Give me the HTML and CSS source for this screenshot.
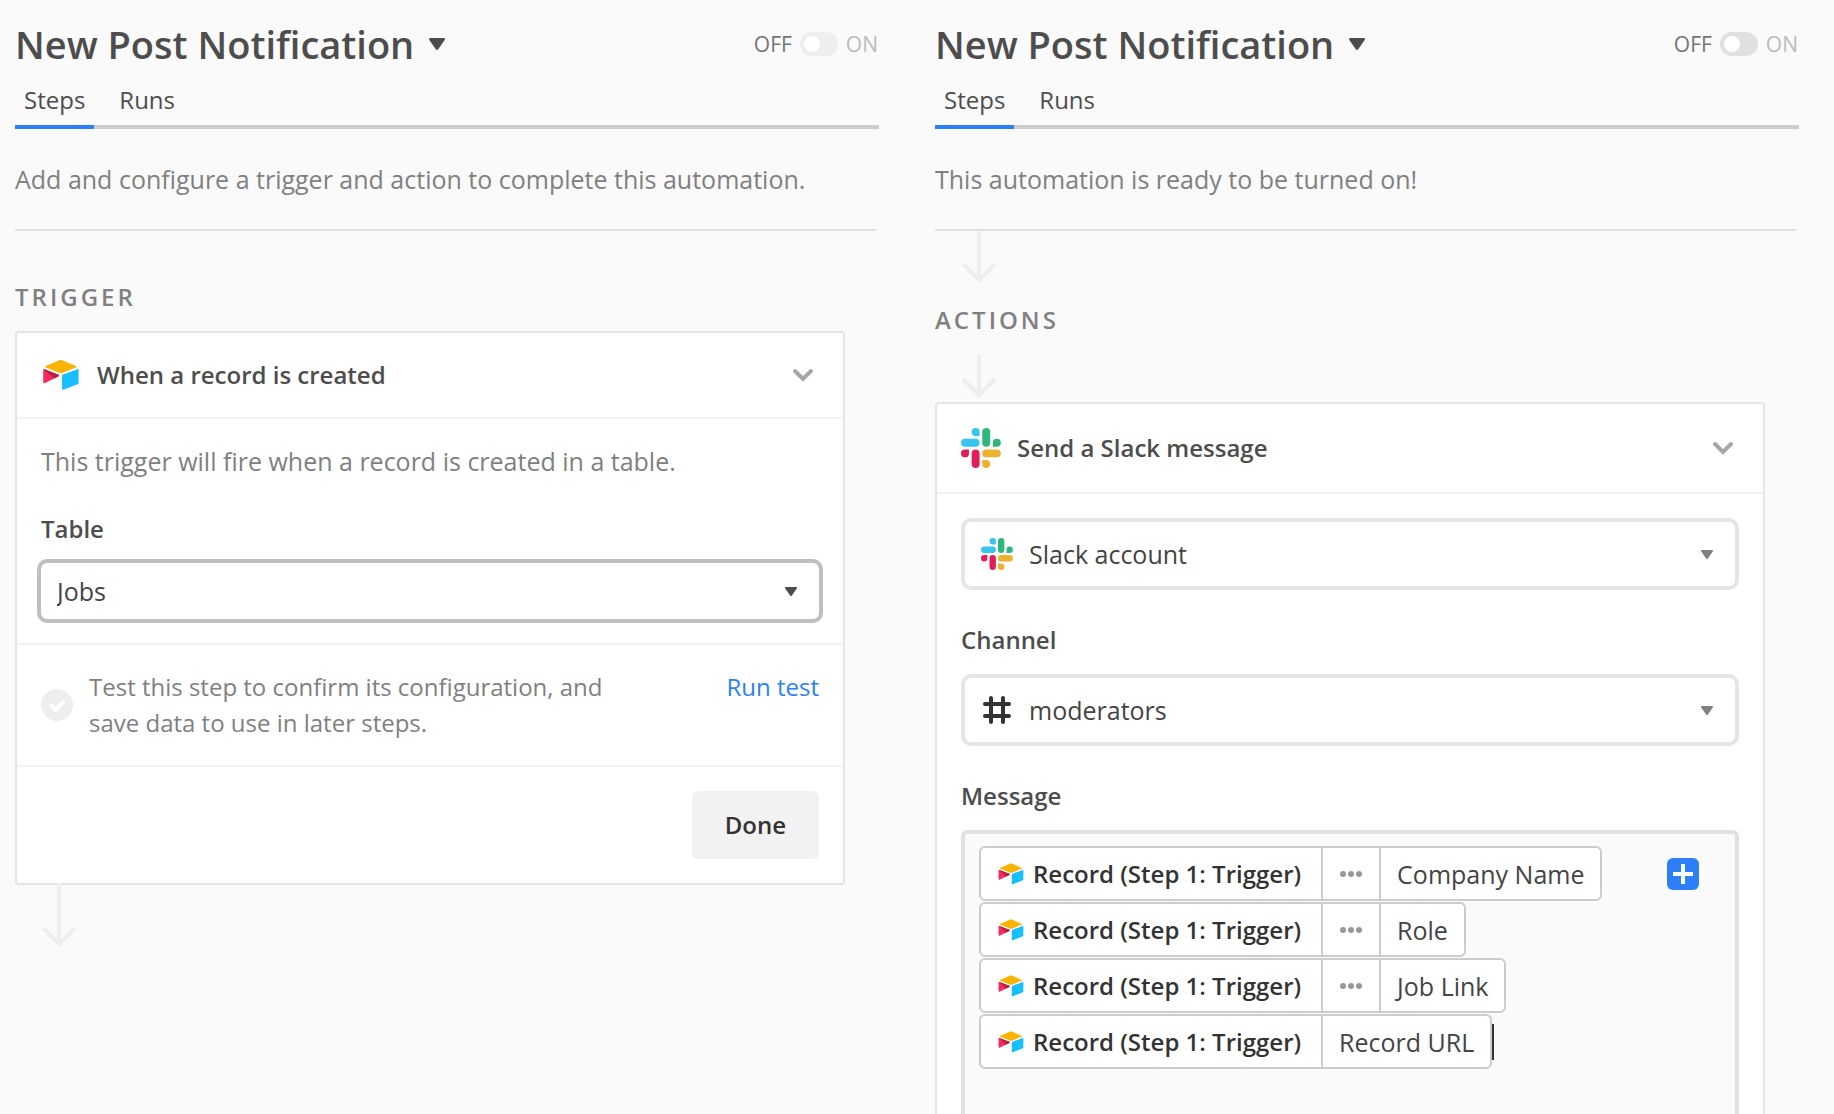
FILE: index.html
```html
<!DOCTYPE html>
<html lang="en">
<head>
<meta charset="utf-8">
<title>New Post Notification</title>
<link rel="stylesheet" href="styles.css">
</head>
<body>
<svg class="sprite" aria-hidden="true">
  <symbol id="airtable" viewBox="0 0 200 170">
    <path fill="#fcb400" d="M90.04 12.37 24.08 39.66C20.41 41.18 20.45 46.39 24.14 47.85L90.38 74.12C96.2 76.43 102.68 76.43 108.5 74.12L174.73 47.85C178.42 46.39 178.46 41.18 174.79 39.66L108.83 12.37C102.82 9.88 96.06 9.88 90.04 12.37"/>
    <path fill="#18bfff" d="M105.31 88.46V154.08C105.31 157.2 108.46 159.33 111.36 158.18L185.17 129.54C186.85 128.87 187.96 127.24 187.96 125.43V59.81C187.96 56.69 184.81 54.55 181.91 55.7L108.1 84.35C106.42 85.02 105.31 86.65 105.31 88.46"/>
    <path fill="#f82b60" d="M88.08 91.85 66.17 102.42 17.71 125.65C14.78 127.07 11.04 124.93 11.04 121.67V60.09C11.04 58.91 11.65 57.89 12.46 57.13 12.79 56.79 13.18 56.51 13.58 56.29 14.68 55.63 16.26 55.45 17.6 55.98L87.71 83.76C91.27 85.17 91.55 90.17 88.08 91.85"/>
    <path fill="#ba1e45" d="M88.08 91.85 66.17 102.42 12.46 57.13C12.79 56.79 13.18 56.51 13.58 56.29 14.68 55.63 16.26 55.45 17.6 55.98L87.71 83.76C91.27 85.17 91.55 90.17 88.08 91.85"/>
  </symbol>
  <symbol id="slack" viewBox="0 0 54 54">
    <path fill="#36c5f0" d="M19.712.133a5.381 5.381 0 0 0-5.376 5.387 5.381 5.381 0 0 0 5.376 5.386h5.376V5.52A5.381 5.381 0 0 0 19.712.133m0 14.365H5.376A5.381 5.381 0 0 0 0 19.884a5.381 5.381 0 0 0 5.376 5.387h14.336a5.381 5.381 0 0 0 5.376-5.387 5.381 5.381 0 0 0-5.376-5.386"/>
    <path fill="#2eb67d" d="M53.76 19.884a5.381 5.381 0 0 0-5.376-5.386 5.381 5.381 0 0 0-5.376 5.386v5.387h5.376a5.381 5.381 0 0 0 5.376-5.387m-14.336 0V5.52A5.381 5.381 0 0 0 34.048.133a5.381 5.381 0 0 0-5.376 5.387v14.364a5.381 5.381 0 0 0 5.376 5.387 5.381 5.381 0 0 0 5.376-5.387"/>
    <path fill="#ecb22e" d="M34.048 54a5.381 5.381 0 0 0 5.376-5.387 5.381 5.381 0 0 0-5.376-5.386h-5.376v5.386A5.381 5.381 0 0 0 34.048 54m0-14.365h14.336a5.381 5.381 0 0 0 5.376-5.386 5.381 5.381 0 0 0-5.376-5.387H34.048a5.381 5.381 0 0 0-5.376 5.387 5.381 5.381 0 0 0 5.376 5.386"/>
    <path fill="#e01e5a" d="M0 34.249a5.381 5.381 0 0 0 5.376 5.386 5.381 5.381 0 0 0 5.376-5.386v-5.387H5.376A5.381 5.381 0 0 0 0 34.25m14.336-.001v14.364A5.381 5.381 0 0 0 19.712 54a5.381 5.381 0 0 0 5.376-5.387V34.25a5.381 5.381 0 0 0-5.376-5.387 5.381 5.381 0 0 0-5.376 5.387"/>
  </symbol>
  <symbol id="caret" viewBox="0 0 16 12">
    <path fill="currentColor" d="M1.2 0h13.6q1.8.3.9 2L9.2 11.2q-1.2 1.4-2.4 0L.3 2Q-.6.3 1.2 0z"/>
  </symbol>
  <symbol id="chevron" viewBox="0 0 32 32">
    <path fill="none" stroke="currentColor" stroke-width="4" stroke-linecap="round" stroke-linejoin="miter" d="M8 12l8 8 8-8"/>
  </symbol>
  <symbol id="hash" viewBox="0 0 32 32">
    <path fill="none" stroke="currentColor" stroke-width="4" stroke-linecap="round" d="M10 4v24M22 4v24M4 10h24M4 22h24"/>
  </symbol>
  <symbol id="dots" viewBox="0 0 22 6">
    <circle fill="currentColor" cx="3" cy="3" r="3"/><circle fill="currentColor" cx="11" cy="3" r="3"/><circle fill="currentColor" cx="19" cy="3" r="3"/>
  </symbol>
</svg>

<main class="board">
  <section class="panel">
    <header class="panel-head">
      <h1><button class="title" type="button">New Post Notification <svg class="title-caret"><use href="#caret"/></svg></button></h1>
      <label class="toggle toggle-disabled"><span class="off">OFF</span><input type="checkbox" role="switch" aria-label="Automation on" disabled><span class="on">ON</span></label>
    </header>
    <nav class="tabs"><a class="tab tab-active" href="#steps">Steps</a><a class="tab" href="#runs">Runs</a></nav>
    <p class="status">Add and configure a trigger and action to complete this automation.</p>
    <div class="flow flow-top">
      <h2 class="group">TRIGGER</h2>
      <article class="card">
        <header class="card-head">
          <svg class="app-icon"><use href="#airtable"/></svg>
          <h3>When a record is created</h3>
          <button class="collapse" type="button" aria-label="Collapse step"><svg><use href="#chevron"/></svg></button>
        </header>
        <div class="card-section config">
          <p class="about">This trigger will fire when a record is created in a table.</p>
          <label class="field-label" for="table">Table</label>
          <div class="picker picker-focus">
            <select id="table"><option>Jobs</option></select>
            <svg class="picker-caret"><use href="#caret"/></svg>
          </div>
        </div>
        <div class="card-section test">
          <svg class="check" viewBox="0 0 32 32"><circle cx="16" cy="16" r="16" fill="#eee"/><path d="M10.500 17l4 4 7.500-8" fill="none" stroke="#fff" stroke-width="4" stroke-linecap="round" stroke-linejoin="round"/></svg>
          <p>Test this step to confirm its configuration, and save data to use in later steps.</p>
          <a class="run" href="#test">Run test</a>
        </div>
        <footer class="card-section finish"><button class="done" type="button">Done</button></footer>
      </article>
      <svg class="arrow arrow-out" viewBox="0 0 36 64"><path d="M18 0v60M2 45l16 16 16-16"/></svg>
    </div>
  </section>

  <section class="panel">
    <header class="panel-head">
      <h1><button class="title" type="button">New Post Notification <svg class="title-caret"><use href="#caret"/></svg></button></h1>
      <label class="toggle"><span class="off">OFF</span><input type="checkbox" role="switch" aria-label="Automation on"><span class="on">ON</span></label>
    </header>
    <nav class="tabs"><a class="tab tab-active" href="#steps">Steps</a><a class="tab" href="#runs">Runs</a></nav>
    <p class="status">This automation is ready to be turned on!</p>
    <div class="flow">
      <svg class="arrow arrow-in" viewBox="0 0 36 52"><path d="M18 0v48M2 33l16 16 16-16"/></svg>
      <h2 class="group">ACTIONS</h2>
      <svg class="arrow arrow-next" viewBox="0 0 36 44"><path d="M18 0v40M2 25l16 16 16-16"/></svg>
      <article class="card">
        <header class="card-head card-head-tall">
          <svg class="app-icon"><use href="#slack"/></svg>
          <h3>Send a Slack message</h3>
          <button class="collapse" type="button" aria-label="Collapse step"><svg><use href="#chevron"/></svg></button>
        </header>
        <div class="card-section fields">
          <div class="picker">
            <svg class="picker-icon"><use href="#slack"/></svg>
            <select class="with-icon" aria-label="Account"><option>Slack account</option></select>
            <svg class="picker-caret"><use href="#caret"/></svg>
          </div>
          <div class="field">
            <label class="field-label" for="channel">Channel</label>
            <div class="picker">
              <svg class="picker-icon"><use href="#hash"/></svg>
              <select class="with-icon" id="channel"><option>moderators</option></select>
              <svg class="picker-caret"><use href="#caret"/></svg>
            </div>
          </div>
          <div class="field">
            <span class="field-label" id="message-label">Message</span>
            <div class="editor">
              <div class="lines" role="textbox" aria-multiline="true" aria-labelledby="message-label" tabindex="0">
                <div class="line"><span class="token"><span class="part source"><svg><use href="#airtable"/></svg>Record (Step 1: Trigger)</span><span class="part more"><svg><use href="#dots"/></svg></span><span class="part">Company Name</span></span></div>
                <div class="line"><span class="token"><span class="part source"><svg><use href="#airtable"/></svg>Record (Step 1: Trigger)</span><span class="part more"><svg><use href="#dots"/></svg></span><span class="part">Role</span></span></div>
                <div class="line"><span class="token"><span class="part source"><svg><use href="#airtable"/></svg>Record (Step 1: Trigger)</span><span class="part more"><svg><use href="#dots"/></svg></span><span class="part">Job Link</span></span></div>
                <div class="line"><span class="token"><span class="part source"><svg><use href="#airtable"/></svg>Record (Step 1: Trigger)</span><span class="part">Record URL</span></span><span class="cursor"></span></div>
              </div>
              <button class="insert" type="button" aria-label="Insert value"><svg viewBox="0 0 32 32"><path d="M16 6v20M6 16h20" stroke="#fff" stroke-width="4"/></svg></button>
            </div>
          </div>
        </div>
      </article>
    </div>
  </section>
</main>
</body>
</html>
```
FILE: styles.css
```css
* { box-sizing: border-box; }

body {
  margin: 0;
  background: #fafafa;
  color: #4d4d4d;
  font: 25px/36px "Open Sans", "Segoe UI", sans-serif;
}

h1, h2, h3, p { margin: 0; font-weight: 600; }
p { font-weight: 400; }
svg { display: block; flex: none; }
.sprite { position: absolute; width: 0; height: 0; }
button { margin: 0; padding: 0; border: 0; background: none; color: inherit; font: inherit; }
a { color: inherit; text-decoration: none; }

.board {
  display: grid;
  grid-template-columns: 1fr 1fr;
  gap: 56px;
  height: 100vh;
  padding: 20px 35px 0 15px;
  overflow: hidden;
}

.panel { display: flex; flex-direction: column; min-width: 0; min-height: 0; }

.panel-head { display: flex; align-items: center; justify-content: space-between; }
.title { display: flex; align-items: center; gap: 15px; font-size: 38px; line-height: 48px; white-space: nowrap; }
.title-caret { width: 16px; height: 12px; }

.toggle { display: flex; align-items: center; gap: 8px; padding-right: 1px; font-size: 21px; color: #757575; }
.toggle .off { font-weight: 500; }
.toggle .on { color: #bbb; }
.toggle input {
  appearance: none;
  width: 38px;
  height: 24px;
  margin: 0;
  padding: 4px;
  border-radius: 12px;
  background: #e0e0e0;
}
.toggle input::before { content: ""; display: block; width: 16px; height: 16px; border-radius: 8px; background: #fff; }
.toggle-disabled input { background: #eee; }

.tabs { display: flex; gap: 16px; margin-top: 14px; box-shadow: inset 0 -4px #ccc; font-size: 24px; }
.tab { padding: 0 9px 7px; border-bottom: 4px solid transparent; }
.tab-active { border-color: #2d7ff9; }

.status { margin-right: 3px; padding: 32px 0; border-bottom: 2px solid #e0e0e0; color: #808080; }

.flow { min-height: 0; padding-right: 34px; overflow: hidden; }
.flow-top { padding-top: 48px; }
.group { margin-bottom: 16px; color: #808080; font-size: 24px; font-weight: 600; letter-spacing: 3px; }

.arrow { width: 36px; margin-left: 26px; fill: none; stroke: #eee; stroke-width: 4px; }
.arrow-out { height: 64px; margin-top: -2px; }
.arrow-in { height: 52px; margin-bottom: 19px; }
.arrow-next { height: 44px; margin-bottom: 4px; }

.card { border: 2px solid #e5e5e5; border-radius: 4px; background: #fff; }
.card-head { display: flex; align-items: center; gap: 16px; height: 84px; padding: 0 24px; }
.card-head-tall { height: 88px; }
.card-head h3 { flex: 1; font-size: 24px; }
.app-icon { width: 40px; height: 40px; }
.collapse { color: #a6a6a6; }
.collapse svg { width: 32px; height: 32px; }

.card-section { padding: 24px; border-top: 2px solid #f2f2f2; }
.config { padding-bottom: 20px; }
.about { margin-bottom: 32px; color: #808080; }
.field-label { display: block; font-size: 24px; font-weight: 600; }

.picker { display: grid; align-items: center; border: 4px solid #e5e5e5; border-radius: 10px; background: #fff; color: #808080; }
.picker > * { grid-area: 1 / 1; }
.picker select {
  appearance: none;
  width: 100%;
  height: 64px;
  padding: 0 48px 0 16px;
  border: 0;
  background: none;
  color: #444;
  font: inherit;
}
.picker .with-icon { padding-left: 64px; }
.picker-icon { width: 32px; height: 32px; margin-left: 16px; color: #333; pointer-events: none; }
.picker-caret { width: 12px; height: 9px; margin-right: 22px; justify-self: end; pointer-events: none; }
.picker-focus { margin: 12px -4px 0; border-color: #bfbfbf; color: #4d4d4d; }
.picker-focus select { height: 56px; }

.test { display: flex; align-items: center; gap: 16px; color: #808080; font-size: 24px; }
.check { width: 32px; height: 32px; }
.test p { flex: 1; padding-right: 64px; }
.run { align-self: flex-start; color: #2d7ff9; }

.finish { display: flex; justify-content: flex-end; }
.done { height: 68px; padding: 0 33px; border-radius: 6px; background: #f2f2f2; color: #333; font-size: 24px; font-weight: 600; }

.fields { display: flex; flex-direction: column; gap: 32px; }
.field { display: flex; flex-direction: column; gap: 16px; }

.editor {
  display: flex;
  align-items: flex-start;
  min-height: 400px;
  padding: 12px 36px 12px 14px;
  border: 4px solid #e0e0e0;
  border-radius: 6px;
  background: #fafafa;
}
.lines { display: flex; flex: 1; flex-direction: column; gap: 1px; color: #444; }
.line { display: flex; align-items: center; }
.token { display: flex; height: 55px; border: 2px solid #ccc; border-radius: 6px; background: #fff; }
.part { display: flex; align-items: center; padding: 0 16px; white-space: nowrap; }
.part + .part { border-left: 2px solid #ccc; }
.source { gap: 8px; padding-right: 20px; color: #333; font-size: 24px; font-weight: 600; }
.source svg { width: 28px; height: 24px; }
.more { padding: 0 17px; color: #999; }
.more svg { width: 22px; height: 6px; }
.cursor { width: 2px; height: 36px; background: #333; }

.insert { margin-top: 12px; border-radius: 6px; background: #2d7ff9; }
.insert svg { width: 32px; height: 32px; }
```
